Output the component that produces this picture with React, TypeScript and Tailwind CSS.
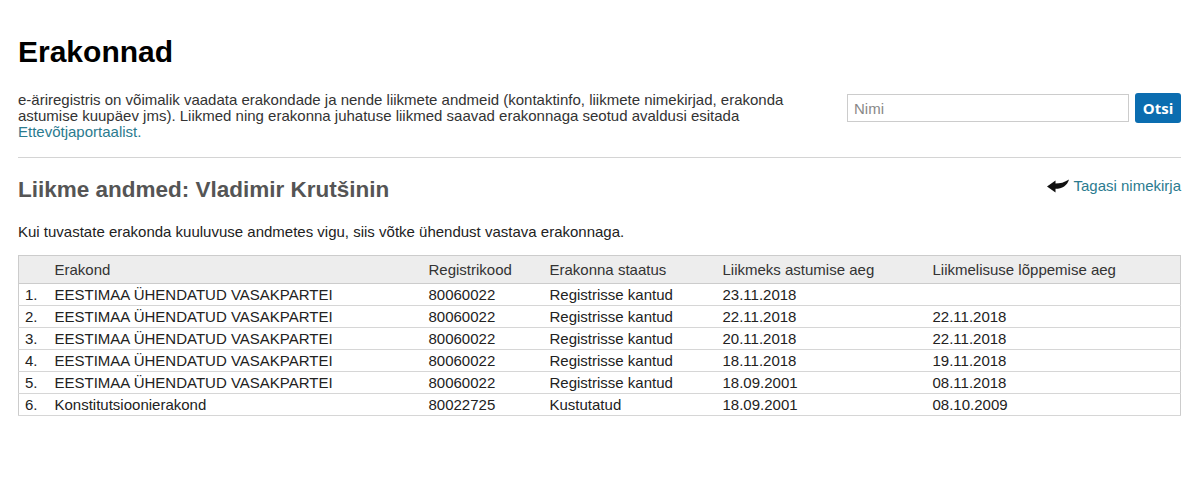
const rows = [
  { name: 'EESTIMAA ÜHENDATUD VASAKPARTEI', code: '80060022', status: 'Registrisse kantud', start: '23.11.2018', end: '' },
  { name: 'EESTIMAA ÜHENDATUD VASAKPARTEI', code: '80060022', status: 'Registrisse kantud', start: '22.11.2018', end: '22.11.2018' },
  { name: 'EESTIMAA ÜHENDATUD VASAKPARTEI', code: '80060022', status: 'Registrisse kantud', start: '20.11.2018', end: '22.11.2018' },
  { name: 'EESTIMAA ÜHENDATUD VASAKPARTEI', code: '80060022', status: 'Registrisse kantud', start: '18.11.2018', end: '19.11.2018' },
  { name: 'EESTIMAA ÜHENDATUD VASAKPARTEI', code: '80060022', status: 'Registrisse kantud', start: '18.09.2001', end: '08.11.2018' },
  { name: 'Konstitutsioonierakond', code: '80022725', status: 'Kustutatud', start: '18.09.2001', end: '08.10.2009' },
];

const BackArrow = () => (
  <svg width="22" height="14" viewBox="0 0 22 14" className="mr-[4px]">
    <path d="M0 7.5 L8.5 1.5 L8.5 4.6 C13 4.6 17.5 3.4 22 0.5 C20.5 6.5 15 9.8 8.5 9.8 L8.5 13.5 Z" fill="#111" />
  </svg>
);

const App = () => {
  return (
    <div className="min-h-[479px] bg-white pl-[18px] pr-[11px] pt-[35px] font-['Liberation_Sans',Arial,sans-serif] text-[#222]">
      <h1 className="text-[30px] font-bold leading-[34px] text-black">Erakonnad</h1>

      <div className="mt-[23px] flex items-start justify-between">
        <p className="w-[800px] text-[15px] leading-[16px] text-[#333]">
          e-äriregistris on võimalik vaadata erakondade ja nende liikmete andmeid (kontaktinfo, liikmete nimekirjad, erakonda
          astumise kuupäev jms). Liikmed ning erakonna juhatuse liikmed saavad erakonnaga seotud avaldusi esitada{' '}
          <a className="text-[#2b7b8f]" href="#">Ettevõtjaportaalist.</a>
        </p>
        <div className="flex items-center gap-[6px] pt-[1px]">
          <input
            className="h-[28px] w-[282px] border border-[#ccc] px-[6px] text-[15px] text-[#333] outline-none placeholder:text-[#888]"
            placeholder="Nimi"
          />
          <button className="h-[30px] w-[46px] rounded-[3px] bg-[#0b6db0] font-['Open_Sans',Arial,sans-serif] text-[15px] font-bold text-white">
            Otsi
          </button>
        </div>
      </div>

      <hr className="mt-[17px] border-t border-[#d4d4d4]" />

      <div className="mt-[19px] flex items-start justify-between">
        <h2 className="text-[22.5px] font-bold leading-[26px] text-[#555]">Liikme andmed: Vladimir Krutšinin</h2>
        <a href="#" className="flex items-center pt-[1px] text-[15px] leading-[16px] text-[#2b7b8f]">
          <BackArrow />
          Tagasi nimekirja
        </a>
      </div>

      <p className="mt-[21px] text-[15px] leading-[16px] text-[#222]">
        Kui tuvastate erakonda kuuluvuse andmetes vigu, siis võtke ühendust vastava erakonnaga.
      </p>

      <table className="mt-[15px] w-full border-collapse border border-[#ccc] text-left text-[15px] leading-[16px]">
        <colgroup>
          <col className="w-[30px]" />
          <col className="w-[374px]" />
          <col className="w-[121px]" />
          <col className="w-[173px]" />
          <col className="w-[210px]" />
          <col />
        </colgroup>
        <thead>
          <tr className="h-[28px] border-b border-[#ccc] bg-[#ededed] text-[#333]">
            <th className="pl-[6px] font-normal"></th>
            <th className="pl-[6px] font-normal">Erakond</th>
            <th className="pl-[6px] font-normal">Registrikood</th>
            <th className="pl-[6px] font-normal">Erakonna staatus</th>
            <th className="pl-[6px] font-normal">Liikmeks astumise aeg</th>
            <th className="pl-[6px] font-normal">Liikmelisuse lõppemise aeg</th>
          </tr>
        </thead>
        <tbody>
          {rows.map((r, i) => (
            <tr key={i} className="h-[22px] border-b border-[#d6d6d6]">
              <td className="pl-[6px]">{i + 1}.</td>
              <td className="pl-[6px]">{r.name}</td>
              <td className="pl-[6px]">{r.code}</td>
              <td className="pl-[6px]">{r.status}</td>
              <td className="pl-[6px]">{r.start}</td>
              <td className="pl-[6px]">{r.end}</td>
            </tr>
          ))}
        </tbody>
      </table>
    </div>
  );
};

export default App;
